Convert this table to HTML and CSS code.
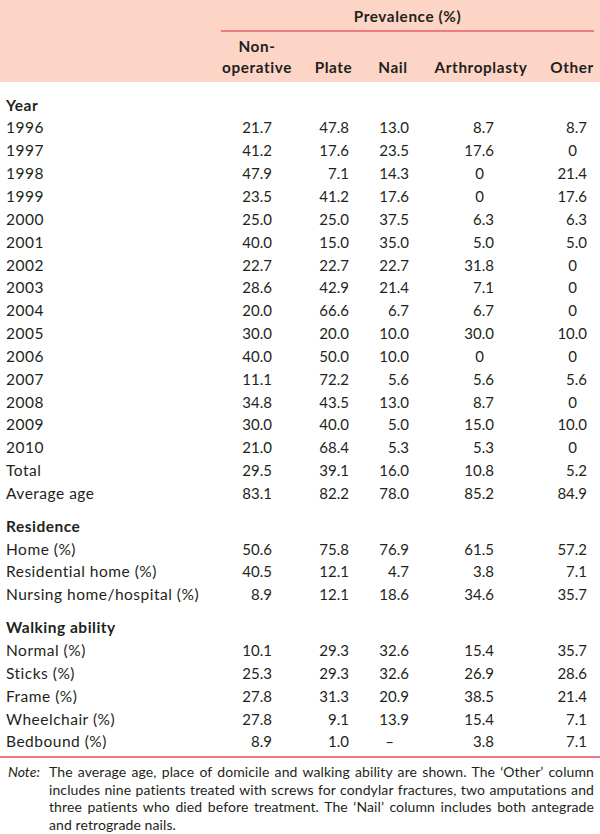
FILE: index.html
```html
<!DOCTYPE html>
<html lang="en">
<head>
<meta charset="utf-8">
<title>Prevalence table</title>
<link rel="stylesheet" href="styles.css">
</head>
<body>
<table class="t">
  <colgroup>
    <col class="c0"><col class="c1"><col class="c2"><col class="c3"><col class="c4"><col class="c5">
  </colgroup>
  <thead>
    <tr class="h1"><th></th><th colspan="5"><div class="span">Prevalence (%)</div></th></tr>
    <tr class="h2"><th></th><th>Non-<br>operative</th><th>Plate</th><th>Nail</th><th>Arthroplasty</th><th>Other</th></tr>
  </thead>
  <tbody>
    <tr class="sec first"><td class="lab b">Year</td><td></td><td></td><td></td><td></td><td></td></tr>
    <tr><td class="lab">1996</td><td>21.7</td><td>47.8</td><td>13.0</td><td>8.7</td><td>8.7</td></tr>
    <tr><td class="lab">1997</td><td>41.2</td><td>17.6</td><td>23.5</td><td>17.6</td><td><span class="z">0</span></td></tr>
    <tr><td class="lab">1998</td><td>47.9</td><td>7.1</td><td>14.3</td><td><span class="z">0</span></td><td>21.4</td></tr>
    <tr><td class="lab">1999</td><td>23.5</td><td>41.2</td><td>17.6</td><td><span class="z">0</span></td><td>17.6</td></tr>
    <tr><td class="lab">2000</td><td>25.0</td><td>25.0</td><td>37.5</td><td>6.3</td><td>6.3</td></tr>
    <tr><td class="lab">2001</td><td>40.0</td><td>15.0</td><td>35.0</td><td>5.0</td><td>5.0</td></tr>
    <tr><td class="lab">2002</td><td>22.7</td><td>22.7</td><td>22.7</td><td>31.8</td><td><span class="z">0</span></td></tr>
    <tr><td class="lab">2003</td><td>28.6</td><td>42.9</td><td>21.4</td><td>7.1</td><td><span class="z">0</span></td></tr>
    <tr><td class="lab">2004</td><td>20.0</td><td>66.6</td><td>6.7</td><td>6.7</td><td><span class="z">0</span></td></tr>
    <tr><td class="lab">2005</td><td>30.0</td><td>20.0</td><td>10.0</td><td>30.0</td><td>10.0</td></tr>
    <tr><td class="lab">2006</td><td>40.0</td><td>50.0</td><td>10.0</td><td><span class="z">0</span></td><td><span class="z">0</span></td></tr>
    <tr><td class="lab">2007</td><td>11.1</td><td>72.2</td><td>5.6</td><td>5.6</td><td>5.6</td></tr>
    <tr><td class="lab">2008</td><td>34.8</td><td>43.5</td><td>13.0</td><td>8.7</td><td><span class="z">0</span></td></tr>
    <tr><td class="lab">2009</td><td>30.0</td><td>40.0</td><td>5.0</td><td>15.0</td><td>10.0</td></tr>
    <tr><td class="lab">2010</td><td>21.0</td><td>68.4</td><td>5.3</td><td>5.3</td><td><span class="z">0</span></td></tr>
    <tr><td class="lab">Total</td><td>29.5</td><td>39.1</td><td>16.0</td><td>10.8</td><td>5.2</td></tr>
    <tr><td class="lab">Average age</td><td>83.1</td><td>82.2</td><td>78.0</td><td>85.2</td><td>84.9</td></tr>
    <tr class="sec"><td class="lab b">Residence</td><td></td><td></td><td></td><td></td><td></td></tr>
    <tr><td class="lab">Home (%)</td><td>50.6</td><td>75.8</td><td>76.9</td><td>61.5</td><td>57.2</td></tr>
    <tr><td class="lab">Residential home (%)</td><td>40.5</td><td>12.1</td><td>4.7</td><td>3.8</td><td>7.1</td></tr>
    <tr><td class="lab">Nursing home/hospital (%)</td><td>8.9</td><td>12.1</td><td>18.6</td><td>34.6</td><td>35.7</td></tr>
    <tr class="sec"><td class="lab b">Walking ability</td><td></td><td></td><td></td><td></td><td></td></tr>
    <tr><td class="lab">Normal (%)</td><td>10.1</td><td>29.3</td><td>32.6</td><td>15.4</td><td>35.7</td></tr>
    <tr><td class="lab">Sticks (%)</td><td>25.3</td><td>29.3</td><td>32.6</td><td>26.9</td><td>28.6</td></tr>
    <tr><td class="lab">Frame (%)</td><td>27.8</td><td>31.3</td><td>20.9</td><td>38.5</td><td>21.4</td></tr>
    <tr><td class="lab">Wheelchair (%)</td><td>27.8</td><td>9.1</td><td>13.9</td><td>15.4</td><td>7.1</td></tr>
    <tr class="last"><td class="lab">Bedbound (%)</td><td>8.9</td><td>1.0</td><td><span class="dash">–</span></td><td>3.8</td><td>7.1</td></tr>
  </tbody>
</table>
<div class="note">
  <div class="nl">Note:</div>
  <div class="nt">
    <span class="ln">The average age, place of domicile and walking ability are shown. The ‘Other’ column</span>
    <span class="ln">includes nine patients treated with screws for condylar fractures, two amputations and</span>
    <span class="ln">three patients who died before treatment. The ‘Nail’ column includes both antegrade</span>
    <span class="ln end">and retrograde nails.</span>
  </div>
</div>
</body>
</html>
```

FILE: styles.css
```css
html, body {
  margin: 0;
  padding: 0;
  background: #ffffff;
}
body {
  width: 600px;
  font-family: Lato, "Open Sans", "Liberation Sans", sans-serif;
  color: #231f20;
  font-size: 15px;
}
.t {
  width: 600px;
  table-layout: fixed;
  border-collapse: collapse;
  border-spacing: 0;
}
.c0 { width: 215px; }
.c1 { width: 84px; }
.c2 { width: 69px; }
.c3 { width: 50px; }
.c4 { width: 126px; }
.c5 { width: 56px; }

thead th {
  background: #fdd5c7;
  font-weight: 700;
  font-size: 15.3px;
  letter-spacing: 0.6px;
  text-align: center;
  line-height: 21px;
  padding: 0;
  vertical-align: bottom;
}
.h1 th { padding-top: 6px; }
.span {
  margin: 0 6px;
  padding-bottom: 3px;
  border-bottom: 2px solid #f07a80;
}
.h2 th { padding-top: 4px; padding-bottom: 4px; }

tbody td {
  line-height: 22.85px;
  padding: 0;
  text-align: right;
  white-space: nowrap;
}
tbody td:nth-child(2) { padding-right: 27px; }
tbody td:nth-child(3) { padding-right: 19px; }
tbody td:nth-child(4) { padding-right: 9px; }
tbody td:nth-child(5) { padding-right: 50px; }
tbody td:nth-child(6) { padding-right: 13px; }
tbody td.lab {
  text-align: left;
  padding-left: 6px;
  padding-right: 0;
  font-size: 15.5px;
  letter-spacing: 0.5px;
}
.b { font-weight: 700; }
.sec td { padding-top: 10px; }
.sec.first td { padding-top: 11.6px; }
.last td { padding-bottom: 3px; }
.z { padding-right: 10px; }
.dash { padding-right: 15px; }

.note {
  display: flex;
  border-top: 2px solid #f07a80;
  padding: 5px 6px 0 8px;
  font-size: 14px;
  line-height: 17.5px;
}
.nl {
  width: 41px;
  flex: none;
  font-style: italic;
}
.nt {
  flex: 1;
  min-width: 0;
}
.ln {
  display: block;
  text-align: justify;
  text-align-last: justify;
  letter-spacing: 0.1px;
}
.ln.end {
  text-align: left;
  text-align-last: left;
}
```
